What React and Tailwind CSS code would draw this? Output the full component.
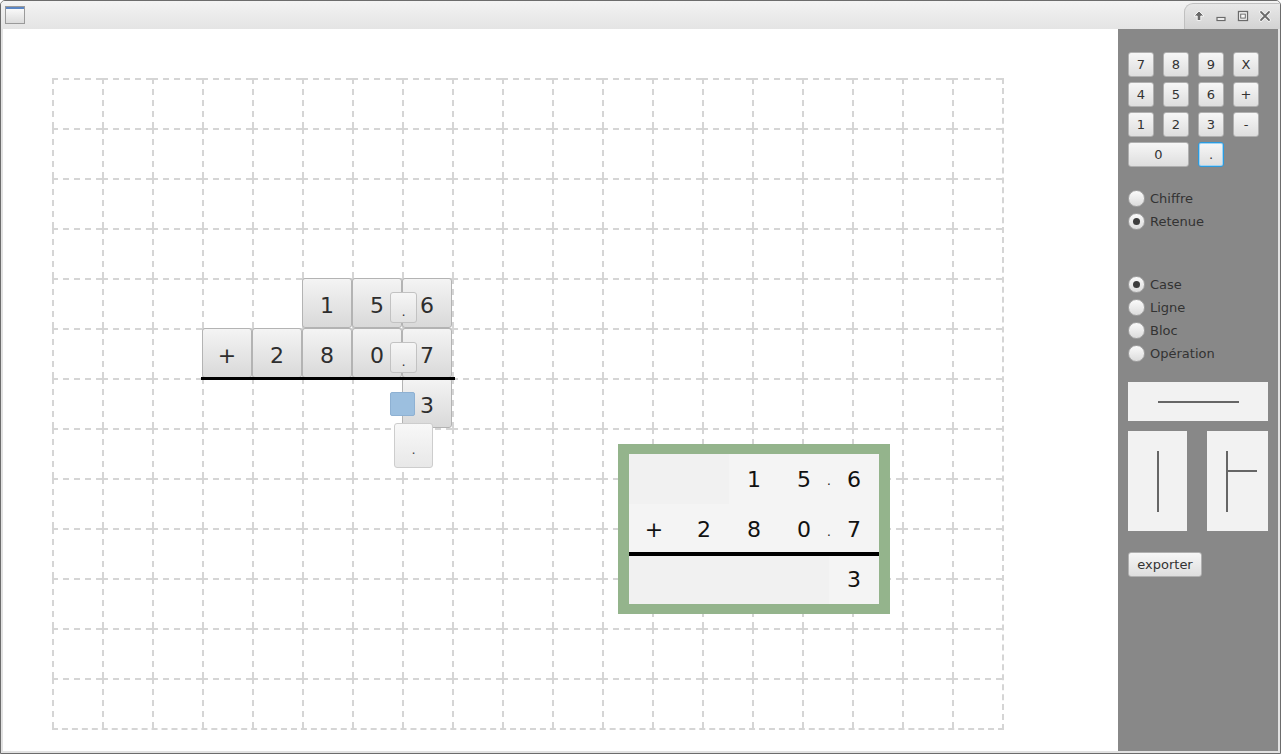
import React from 'react';

const CELL = 50;

// tiles of the operation being built on the canvas (col, row in grid cells)
const TILES = [
    { c: 5, r: 4, v: '1' },
    { c: 6, r: 4, v: '5' },
    { c: 7, r: 4, v: '6' },
    { c: 3, r: 5, v: '+' },
    { c: 4, r: 5, v: '2' },
    { c: 5, r: 5, v: '8' },
    { c: 6, r: 5, v: '0' },
    { c: 7, r: 5, v: '7' },
    { c: 7, r: 6, v: '3' },
];

const RESULT = [
    ['', '', '1', '5', '6'],
    ['+', '2', '8', '0', '7'],
];

const KEYS = ['7', '8', '9', 'X', '4', '5', '6', '+', '1', '2', '3', '-'];

const Radio = ({ label, checked }) => (
    <div className="flex h-[23px] items-center gap-[5px]">
        <span className="flex h-[17px] w-[17px] items-center justify-center rounded-full border border-[#a3a3a3] bg-gradient-to-b from-[#fbfbfb] to-[#dcdcdc]">
            {checked && <span className="h-[7px] w-[7px] rounded-full bg-[#3d3d3d]" />}
        </span>
        <span className="text-[13px] text-[#333]">{label}</span>
    </div>
);

const Key = ({ children, className = '' }) => (
    <button className={`flex h-[25px] items-center justify-center rounded-[3px] border bg-gradient-to-b from-[#f7f7f7] to-[#dedede] text-[13px] leading-none text-[#333] ${className}`}>
        {children}
    </button>
);

const Grid = () => (
    <div className="relative grid w-max auto-rows-[50px] grid-cols-[repeat(19,50px)] border-r-2 border-b-2 border-dashed border-[#d5d5d5]">
        {Array.from({ length: 19 * 13 }).map((_, i) => (
            <div key={i} className="border-t-2 border-l-2 border-dashed border-[#d5d5d5]" />
        ))}

        {TILES.map(t => (
            <div
                key={`${t.c}-${t.r}`}
                className="absolute flex items-center justify-center rounded-[3px] border border-[#b3b3b3] bg-gradient-to-b from-[#f4f4f4] to-[#d9d9d9] pt-[4px] text-[22px] text-[#2e2e2e]"
                style={{ left: t.c * CELL, top: t.r * CELL, width: CELL, height: CELL }}
            >
                {t.v}
            </div>
        ))}

        {/* decimal separators sitting over the tile boundary */}
        {[214, 264].map(top => (
            <div
                key={top}
                className="absolute flex items-center justify-center rounded-[3px] border border-[#c2c2c2] bg-gradient-to-b from-[#f6f6f6] to-[#e2e2e2] pt-[8px] text-[13px] text-[#333]"
                style={{ left: 338, top, width: 27, height: 31 }}
            >
                .
            </div>
        ))}

        {/* operation bar */}
        <div className="absolute left-[149px] top-[299px] h-[3px] w-[254px] bg-black" />

        {/* carry slot */}
        <div className="absolute left-[338px] top-[314px] h-[24px] w-[25px] rounded-[2px] border border-[#8eb1d3] bg-[#9cbfdf]" />

        {/* dragged dot */}
        <div className="absolute left-[342px] top-[345px] flex h-[45px] w-[39px] items-center justify-center rounded-[3px] border border-[#cdcdcd] bg-gradient-to-b from-[#f8f8f8] to-[#e8e8e8] pt-[8px] text-[13px] text-[#444]">
            .
        </div>

        {/* rendered operation */}
        <div className="absolute left-[566px] top-[366px] h-[170px] w-[272px] border-x-[11px] border-y-[10px] border-[#94b48c] bg-[#f4f4f4] text-[22px] text-[#111]">
            {RESULT.map((row, ri) => (
                <div key={ri} className={`relative flex ${ri === 0 ? 'h-[50px]' : 'h-[48px]'}`}>
                    {row.map((d, ci) => (
                        <div key={ci} className={`flex w-[50px] items-center justify-center ${d ? '' : 'bg-[#f1f1f1]'} ${ri === 1 ? 'pt-[2px]' : ''}`}>
                            {d}
                        </div>
                    ))}
                    <span className={`absolute left-[198px] text-[12px] ${ri === 0 ? 'top-[18px]' : 'top-[19px]'}`}>.</span>
                </div>
            ))}
            <div className="h-[4px] bg-black" />
            <div className="flex h-[48px]">
                <div className="w-[200px] bg-[#f1f1f1]" />
                <div className="flex w-[50px] items-center justify-center pb-[2px]">3</div>
            </div>
        </div>
    </div>
);

const Sidebar = () => (
    <div className="flex w-[160px] flex-col bg-[#888888] px-[10px] pt-[23px]">
        <div className="grid w-[131px] grid-cols-[repeat(4,26px)] gap-x-[9px] gap-y-[5px]">
            {KEYS.map(k => (
                <Key key={k} className="border-[#b0b0b0]">{k}</Key>
            ))}
            <Key className="col-span-2 border-[#b0b0b0]">0</Key>
            <Key className="border-[#2a9be0] shadow-[inset_0_0_0_1px_#9fd3f3]">.</Key>
        </div>

        <div className="mt-[20px] flex flex-col">
            <Radio label="Chiffre" />
            <Radio label="Retenue" checked />
        </div>

        <div className="mt-[40px] flex flex-col">
            <Radio label="Case" checked />
            <Radio label="Ligne" />
            <Radio label="Bloc" />
            <Radio label="Opération" />
        </div>

        <div className="mt-[17px] flex h-[39px] w-[140px] items-center justify-center bg-[#f2f2f2]">
            <div className="h-[2px] w-[81px] bg-[#666]" />
        </div>

        <div className="mt-[10px] flex gap-[20px]">
            <div className="flex h-[100px] w-[60px] items-center justify-center bg-[#f2f2f2]">
                <div className="h-[61px] w-[2px] bg-[#666]" />
            </div>
            <div className="flex h-[100px] w-[61px] items-center bg-[#f2f2f2] pl-[19px]">
                <div className="relative h-[61px] w-[2px] bg-[#666]">
                    <div className="absolute left-[2px] top-[19px] h-[2px] w-[29px] bg-[#666]" />
                </div>
            </div>
        </div>

        <Key className="mt-[21px] w-[74px] border-[#b0b0b0]">exporter</Key>
    </div>
);

const TitleBar = () => (
    <div className="flex h-[28px] items-stretch bg-gradient-to-b from-[#f3f3f3] to-[#e4e4e4]">
        <div className="flex items-center pl-[4px]">
            <div className="h-[18px] w-[20px] border border-[#9a9a9a] bg-gradient-to-b from-[#fdfdfd] to-[#dcdcdc]">
                <div className="h-[2px] bg-[#5b86c4]" />
            </div>
        </div>
        <div className="flex-1" />
        <div className="mt-[2px] flex w-[96px] items-center gap-[10px] rounded-tl-[9px] border-t border-l border-[#c0c0c0] bg-gradient-to-b from-[#e8e8e8] to-[#d3d3d3] pb-[2px] pl-[8px]">
            <svg width="12" height="12" viewBox="0 0 12 12">
                <path d="M6 1 L11 6 L7.8 6 L7.8 10.5 L4.2 10.5 L4.2 6 L1 6 Z" fill="#6a6a6a" stroke="#fafafa" strokeWidth="0.9" strokeLinejoin="round" />
            </svg>
            <svg width="12" height="12" viewBox="0 0 12 12">
                <rect x="2" y="7.5" width="8" height="3" fill="#fafafa" stroke="#6a6a6a" strokeWidth="1.2" />
            </svg>
            <svg width="12" height="12" viewBox="0 0 12 12">
                <rect x="1.5" y="1.5" width="9" height="9" fill="#fafafa" stroke="#6a6a6a" strokeWidth="1.3" />
                <rect x="3.7" y="4.1" width="4.6" height="4" fill="none" stroke="#6a6a6a" strokeWidth="1" />
            </svg>
            <svg width="12" height="12" viewBox="0 0 12 12">
                <path d="M2 2 L10 10 M10 2 L2 10" stroke="#fafafa" strokeWidth="3.2" strokeLinecap="round" />
                <path d="M2 2 L10 10 M10 2 L2 10" stroke="#6a6a6a" strokeWidth="1.8" strokeLinecap="round" />
            </svg>
        </div>
    </div>
);

export default function App() {
    return (
        <div className="h-[754px] w-[1281px] overflow-hidden rounded-t-[5px] border border-[#6c6c6c] bg-[#e2e2e2] font-['DejaVu_Sans',sans-serif]">
            <TitleBar />
            <div className="flex h-[722px] px-[2px]">
                <div className="flex-1 bg-white pl-[49px] pt-[49px]">
                    <Grid />
                </div>
                <Sidebar />
            </div>
        </div>
    );
}
